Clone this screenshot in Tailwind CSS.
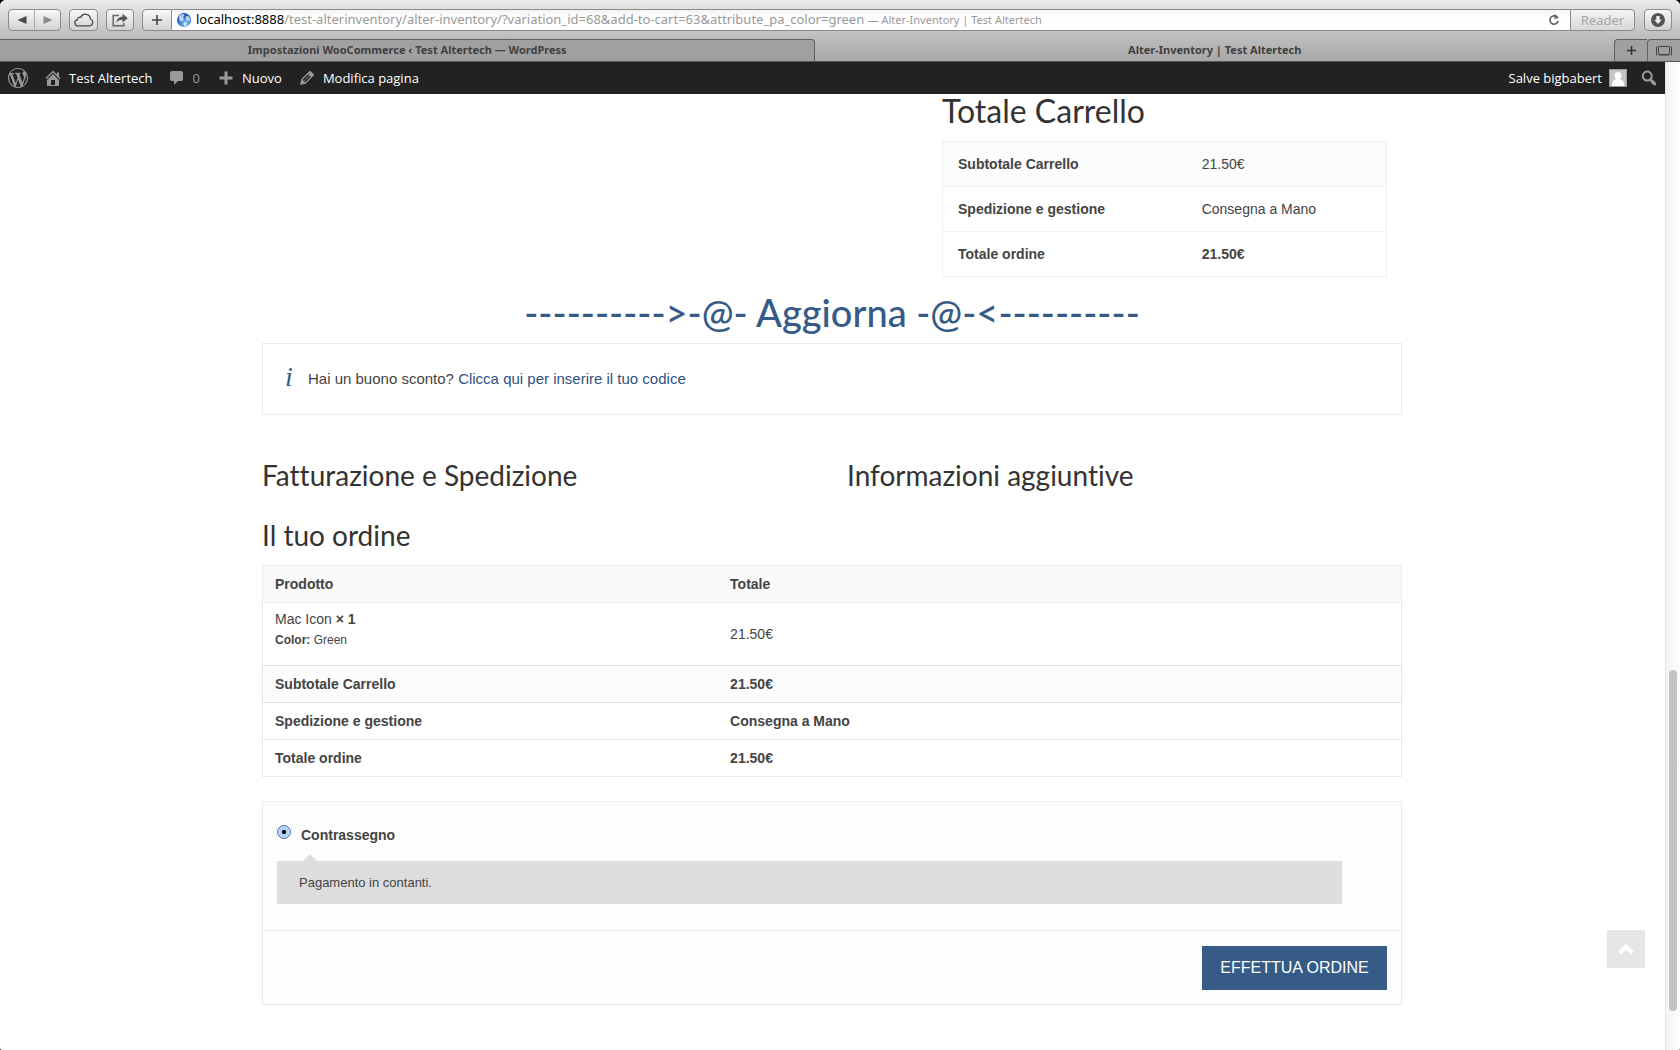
<!DOCTYPE html>
<html lang="it">
<head>
<meta charset="utf-8">
<title>Alter-Inventory | Test Altertech</title>
<script src="https://cdn.jsdelivr.net/npm/@tailwindcss/browser@4"></script>
</head>
<body class="bg-black">
<div class="flex min-h-screen flex-col overflow-hidden rounded-t-md rounded-b-xs bg-white font-['Liberation_Sans',Arial,sans-serif] text-sm text-[#444]">

  <!-- Browser window -->
  <header class="bg-linear-to-b from-[#ececec] via-[#c0c0c0] via-55% to-[#a6a6a6] font-['Noto_Sans',sans-serif]">
    <div class="flex h-[39px] items-center px-2">
      <div class="flex h-[22px] w-[53px] rounded border border-[#8a8a8a] bg-linear-to-b from-[#f8f8f8] to-[#d2d2d2]">
        <button aria-label="Indietro" class="flex flex-1 items-center justify-center border-r border-[#aaa]"><svg class="size-[10px]" viewBox="0 0 10 10"><path d="M9.500 1v8L.5 5z" fill="#4a4a4a"/></svg></button>
        <button aria-label="Avanti" class="flex flex-1 items-center justify-center"><svg class="size-[10px]" viewBox="0 0 10 10"><path d="M.5 1v8L9.500 5z" fill="#8c8c8c"/></svg></button>
      </div>
      <button aria-label="iCloud" class="ml-2 flex h-[22px] w-[29px] items-center justify-center rounded border border-[#8a8a8a] bg-linear-to-b from-[#f8f8f8] to-[#d2d2d2]"><svg class="h-[14px] w-5" viewBox="0 0 20 14"><path d="M4.500 12.800h11a3.500 3.500 0 0 0 .9-6.800A5 5 0 0 0 6.800 4.300 2.600 2.600 0 0 0 3.300 6.900 3 3 0 0 0 4.500 12.800z" fill="none" stroke="#4a4a4a" stroke-width="1.300"/></svg></button>
      <button aria-label="Condividi" class="ml-2 flex h-[22px] w-7 items-center justify-center rounded border border-[#8a8a8a] bg-linear-to-b from-[#f8f8f8] to-[#d2d2d2]"><svg class="h-[14px] w-[18px]" viewBox="0 0 18 14"><path d="M8 2.500H2.200v10.200h10.600V10" fill="none" stroke="#666" stroke-width="1.500"/><path d="M5.500 9.500C5.700 5.700 8 3.800 11.500 3.700V.8l5.300 4.500-5.300 4.300V6.700C9 6.600 7 7.300 5.500 9.500z" fill="#555"/></svg></button>
      <button aria-label="Aggiungi preferito" class="ml-2 flex h-[22px] w-[30px] items-center justify-center rounded-l border border-[#8a8a8a] bg-linear-to-b from-[#f8f8f8] to-[#d2d2d2]"><svg class="size-3" viewBox="0 0 12 12"><path d="M6 1v10M1 6h10" stroke="#444" stroke-width="1.600"/></svg></button>
      <div class="flex h-[22px] min-w-0 flex-1 items-center border-y border-[#8a8a8a] bg-linear-to-b from-[#f4f4f4] to-white to-40% px-1">
        <svg class="size-4 shrink-0" viewBox="0 0 16 16"><defs><radialGradient id="globe" cx=".6" cy=".75" r=".8"><stop offset="0" stop-color="#8fd4f8"/><stop offset=".6" stop-color="#2b6fd0"/><stop offset="1" stop-color="#1a3f9c"/></radialGradient></defs><circle cx="8" cy="8" r="7" fill="url(#globe)"/><path d="M2.500 4.500C4.500 2 7 1.500 8.500 2.500L7 5.500l1 1.500-2 2.500-2.500-1zM10 4l3 .5 1.300 3.500-2.300 1-2-1.500zM8 10l3 .5-1 3.500-2 .3z" fill="#e8f4fd" opacity=".75"/></svg>
        <div role="textbox" aria-label="Indirizzo" class="ml-1 flex-1 truncate text-[13px] leading-5 text-[#999]"><span class="text-black">localhost:8888</span>/test-alterinventory/alter-inventory/?variation_id=68&amp;add-to-cart=63&amp;attribute_pa_color=green <span class="text-[11px]">— Alter-Inventory | Test Altertech</span></div>
        <button aria-label="Ricarica" class="mr-[6px]"><svg class="size-3" viewBox="0 0 12 12"><path d="M9.500 3.500A4.200 4.200 0 1 0 10.200 7" fill="none" stroke="#666" stroke-width="1.700"/><path d="M6.500 0v5.200L11 3.500z" fill="#666"/></svg></button>
      </div>
      <button class="h-[22px] w-[65px] rounded-r border border-[#8a8a8a] bg-linear-to-b from-[#f4f4f4] to-[#d8d8d8] text-[13px] leading-5 text-[#a5a5a5]">Reader</button>
      <button aria-label="Download" class="ml-[9px] flex h-[22px] w-7 items-center justify-center rounded border border-[#8a8a8a] bg-linear-to-b from-[#f8f8f8] to-[#d2d2d2]"><svg class="size-[14px]" viewBox="0 0 14 14"><circle cx="7" cy="7" r="7" fill="#555"/><path d="M5.300 3h3.400v3.800h2.100L7 11 3.200 6.800h2.100z" fill="#eee"/></svg></button>
    </div>
    <nav class="flex h-[23px] border-b border-[#555] text-[11px] leading-5 font-bold text-[#404040]">
      <button class="flex-[51] rounded-tr border-t border-r border-[#606060] bg-[#a0a0a0] pb-[2px] font-bold">Impostazioni WooCommerce ‹ Test Altertech — WordPress</button>
      <button class="flex-[50] pb-px font-bold">Alter-Inventory | Test Altertech</button>
      <button aria-label="Nuova scheda" class="flex w-[33px] items-center justify-center rounded-tl border-t border-l border-[#606060] bg-[#a0a0a0]"><svg class="size-[9px]" viewBox="0 0 9 9"><path d="M4.500 0v9M0 4.500h9" stroke="#333" stroke-width="1.600"/></svg></button>
      <button aria-label="Mostra tutte le schede" class="flex w-[33px] items-center justify-center rounded-tl border-t border-l border-[#606060] bg-[#a0a0a0]"><svg class="h-[10px] w-4" viewBox="0 0 16 10"><path d="M.5 .5v9M15.500 .5v9M2.500 .5h11v8h-11z" fill="none" stroke="#444"/><path d="M3 9h10" stroke="#444"/></svg></button>
    </nav>
  </header>

  <div class="flex flex-1">
    <div class="relative min-w-0 flex-1">

      <!-- WordPress admin bar -->
      <nav class="flex h-8 items-center bg-[#222] pr-[6px] pl-2 font-['Open_Sans',sans-serif] text-[13px] text-white">
        <a href="#" aria-label="WordPress"><svg class="size-5" viewBox="0 0 20 20" fill="#999"><path d="M20 10c0-5.510-4.490-10-10-10C4.480 0 0 4.490 0 10c0 5.520 4.480 10 10 10 5.510 0 10-4.480 10-10zM7.780 15.370L4.370 6.220c.55-.02 1.170-.08 1.170-.08.5-.06.44-1.130-.06-1.110 0 0-1.450.11-2.370.11-.18 0-.37 0-.58-.01C4.120 2.690 6.870 1.110 10 1.110c2.330 0 4.450.87 6.050 2.340-.68-.11-1.650.39-1.650 1.580 0 .74.45 1.360.9 2.100.35.61.55 1.360.55 2.460 0 1.490-1.400 5-1.400 5l-3.030-8.370c.54-.02.82-.17.82-.17.5-.05.44-1.250-.06-1.220 0 0-1.440.12-2.380.12-.87 0-2.330-.12-2.330-.12-.5-.03-.56 1.200-.06 1.220l.92.08 1.260 3.410zM17.410 10c.24-.64.74-1.870.43-4.250.7 1.290 1.050 2.710 1.050 4.250 0 3.290-1.730 6.240-4.400 7.780.97-2.590 1.940-5.200 2.920-7.780zM6.100 18.090C3.120 16.650 1.110 13.530 1.110 10c0-1.300.23-2.480.72-3.590C3.250 10.300 4.670 14.200 6.100 18.090zm4.030-6.630l2.580 6.980c-.86.29-1.760.45-2.710.45-.79 0-1.570-.11-2.290-.33.81-2.380 1.620-4.740 2.420-7.100z"/></svg></a>
        <a href="#" class="ml-[15px] flex items-center gap-[6px]"><svg class="size-5" viewBox="0 0 20 20" fill="#999"><path d="M16 8.500l1.530 1.530-1.060 1.060L10 4.600l-6.470 6.490-1.060-1.060L10 2.500l4 4v-2h2v4zm-6-2.460l6 5.990V18H4v-5.970zM12 17v-5H8v5h4z"/></svg>Test Altertech</a>
        <a href="#" class="ml-[14px] flex items-center gap-[6px] text-[#999]"><svg class="size-5" viewBox="0 0 20 20" fill="#999"><path d="M5 3h9q.82 0 1.410.59T16 5v6q0 .82-.59 1.410T14 13h-3l-4 4v-4H5q-.82 0-1.410-.59T3 11V5q0-.82.59-1.410T5 3z"/></svg>0</a>
        <a href="#" class="ml-4 flex items-center gap-[6px]"><svg class="size-5" viewBox="0 0 20 20" fill="#999"><path d="M16.500 8.500v3h-5v5h-3v-5h-5v-3h5v-5h3v5z"/></svg>Nuovo</a>
        <a href="#" class="ml-[15px] flex items-center gap-[6px]"><svg class="size-5" viewBox="0 0 20 20" fill="#999"><path d="M13.890 3.390l2.710 2.720c.46.46.42 1.240.03 1.640l-8.010 8.020-5.560 1.160 1.160-5.580s7.600-7.630 7.990-8.030c.39-.39 1.220-.39 1.680.07zm-2.730 2.790l-5.590 5.610 1.110 1.110 5.540-5.650zm-2.970 8.230l5.580-5.600-1.070-1.080-5.590 5.600z"/></svg>Modifica pagina</a>
        <a href="#" class="ml-auto flex items-center gap-[7px]">Salve bigbabert<svg class="size-[18px]" viewBox="0 0 18 18"><path d="M0 0h18v18H0z" fill="#999"/><path d="M1 1h16v16H1z" fill="#c4c4c4"/><path d="M9 3a3.600 3.600 0 0 1 2 6.600c.2 1.400 4 1.600 4 5.400v2H3v-2c0-3.800 3.800-4 4-5.400A3.600 3.600 0 0 1 9 3z" fill="#fff"/></svg></a>
        <button aria-label="Cerca" class="ml-3"><svg class="size-5" viewBox="0 0 20 20" fill="#999"><path d="M12.140 4.180c1.870 1.870 2.110 4.750.72 6.890.12.1.22.21.36.31.2.16.47.36.81.59.34.24.56.39.66.47.42.31.73.57.94.78.32.32.6.65.84 1 .25.35.44.69.59 1.040.14.35.21.68.18 1-.02.32-.14.59-.36.81s-.49.34-.81.36c-.31.02-.65-.04-.99-.19-.35-.14-.7-.34-1.040-.59-.35-.24-.68-.52-1-.84-.21-.21-.47-.52-.77-.93-.1-.13-.25-.35-.47-.66-.22-.32-.4-.57-.56-.78-.16-.2-.29-.35-.44-.5-2.070 1.090-4.690.76-6.440-.98-2.140-2.150-2.140-5.640 0-7.780 2.150-2.150 5.630-2.150 7.780 0zm-1.410 6.360c1.360-1.370 1.360-3.580 0-4.950-1.370-1.370-3.590-1.370-4.950 0-1.370 1.370-1.370 3.580 0 4.950 1.360 1.370 3.580 1.370 4.950 0z"/></svg></button>
      </nav>

      <main class="mx-auto max-w-[1141px] pr-px pb-8 [font-variant-ligatures:none]">
        <!-- Cart totals -->
        <section class="mr-[15px] ml-auto w-[445px]">
          <h2 class="h-[47px] font-['Lato',sans-serif] text-[32px] leading-[34px] text-[#333]">Totale Carrello</h2>
          <table class="w-full table-fixed border-collapse border border-[#f0f0f0] text-left">
            <tr class="h-[45px] border-b border-[#f0f0f0] bg-[#fcfcfc]"><th class="w-[55%] px-[15px]">Subtotale Carrello</th><td class="px-[15px]">21.50€</td></tr>
            <tr class="h-[45px] border-b border-[#f0f0f0]"><th class="px-[15px]">Spedizione e gestione</th><td class="px-[15px]">Consegna a Mano</td></tr>
            <tr class="h-[45px]"><th class="px-[15px]">Totale ordine</th><td class="px-[15px] font-bold">21.50€</td></tr>
          </table>
        </section>

        <h1 class="mt-2 mb-1 text-center font-['Lato',sans-serif] text-[38px] leading-[54px] font-medium text-[#355b86]"><a href="#">----------&gt;-@- Aggiorna -@-&lt;----------</a></h1>

        <div class="flex h-[72px] items-center border border-[#ebebeb] pl-[22px] text-[15px]">
          <span class="w-[23px] pb-1 font-['Liberation_Serif',serif] text-[28px] leading-7 text-[#355b86] italic">i</span>
          <p>Hai un buono sconto? <a href="#" class="text-[#2d5284]">Clicca qui per inserire il tuo codice</a></p>
        </div>

        <div class="mt-10 grid grid-cols-2 gap-x-[30px] font-['Lato',sans-serif] text-[28px] leading-10 text-[#333]">
          <h3>Fatturazione e Spedizione</h3>
          <h3>Informazioni aggiuntive</h3>
          <h3 class="mt-5">Il tuo ordine</h3>
        </div>

        <!-- Order review -->
        <table class="mt-[10px] w-full table-fixed border-collapse border border-[#ebebeb] text-left">
          <thead><tr class="h-[37px] border-b border-[#ebebeb] bg-[#f9f9f9]"><th class="w-[40%] px-3">Prodotto</th><th class="px-3">Totale</th></tr></thead>
          <tbody><tr class="h-[63px] border-b border-[#e3e3e3]">
            <td class="px-3 pt-[6px] align-top"><p class="leading-[21px]">Mac Icon <b>× 1</b></p><p class="text-xs leading-5"><b>Color:</b> Green</p></td>
            <td class="px-3">21.50€</td>
          </tr></tbody>
          <tfoot class="font-bold">
            <tr class="h-[37px] border-b border-[#e3e3e3] bg-[#fcfcfc]"><th class="px-3">Subtotale Carrello</th><td class="px-3">21.50€</td></tr>
            <tr class="h-[37px] border-b border-[#e3e3e3]"><th class="px-3">Spedizione e gestione</th><td class="px-3">Consegna a Mano</td></tr>
            <tr class="h-[37px]"><th class="px-3">Totale ordine</th><td class="px-3">21.50€</td></tr>
          </tfoot>
        </table>

        <!-- Payment -->
        <form class="mt-6 border border-[#ebebeb] bg-[#fdfdfd]">
          <div class="border-b border-[#ebebeb] pt-[22px] pr-[59px] pb-[26px] pl-[14px]">
            <div class="flex items-start">
              <input type="radio" id="cod" name="payment" checked class="mt-px size-[14px] appearance-none rounded-full border border-[#5a6aa8] bg-radial from-[#111] from-20% via-[#a9d2fa] via-30% to-[#cfe6fc]">
              <label for="cod" class="ml-[10px] pt-[3px] pb-px leading-4 font-bold">Contrassegno</label>
            </div>
            <div class="relative mt-[17px] bg-[#ddd] px-[22px] py-3 text-[13px] leading-[19px]">
              <svg class="absolute -top-[7px] left-[26px] h-[7px] w-[14px]" viewBox="0 0 14 7"><path d="M0 7l7-7 7 7z" fill="#ddd"/></svg>
              Pagamento in contanti.
            </div>
          </div>
          <div class="flex justify-end px-[14px] py-[14px]">
            <button type="button" class="mt-px h-11 w-[185px] bg-[#355b86] text-base text-white">EFFETTUA ORDINE</button>
          </div>
        </form>
      </main>

      <a href="#" aria-label="Torna su" class="absolute right-5 bottom-[82px] flex size-[38px] items-center justify-center bg-[#e6e6e6]"><svg class="h-3 w-4" viewBox="0 0 16 12"><path d="M1.500 10L8 3.500l6.500 6.500" fill="none" stroke="#fff" stroke-width="4"/></svg></a>
    </div>

    <!-- Scroll bar -->
    <div class="flex w-[15px] flex-col items-center border-l border-[#e3e3e3] bg-linear-to-r from-[#f3f3f3] to-[#fdfdfd]">
      <div class="flex-1"></div>
      <div class="h-[341px] w-2 rounded-full bg-[#c2c2c2]"></div>
      <div class="h-[39px]"></div>
    </div>
  </div>
</div>
</body>
</html>
